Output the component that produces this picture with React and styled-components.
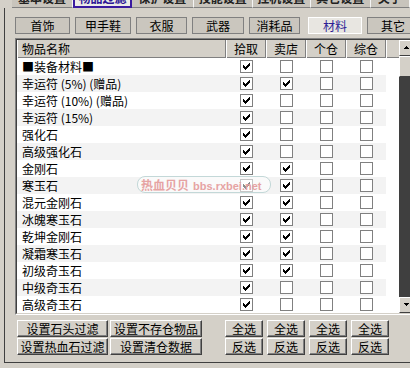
import React from 'react';
import styled, { createGlobalStyle } from 'styled-components';

const GlobalStyle = createGlobalStyle`
  html, body {
    margin: 0;
    padding: 0;
    background: #d4d0c8;
  }
  body {
    font-family: "Noto Sans CJK SC", "Liberation Sans", sans-serif;
    font-size: 12px;
    color: #000;
  }
  * { box-sizing: border-box; }
`;

const Window = styled.div`
  position: relative;
  width: 410px;
  height: 368px;
  overflow: hidden;
  background: #d4d0c8;
  display: flex;
  flex-direction: column;
`;

const TopTabs = styled.div`
  display: flex;
  height: 8px;
  padding-left: 12px;
  flex-shrink: 0;
`;

const TopTab = styled.div`
  width: ${p => p.$w}px;
  height: 8px;
  overflow: hidden;
  text-align: center;
  line-height: 12px;
  font-weight: bold;
  background: ${p => (p.$active ? '#ecebe7' : '#c8c4bc')};
  color: ${p => (p.$active ? '#2e1896' : '#222')};
  border: ${p => (p.$active ? '2px solid #3a1aa0' : 'none')};
  border-top: none;
  border-right: ${p => (p.$active ? '2px solid #3a1aa0' : '1px solid #f4f4f4')};
  border-bottom: ${p => (p.$active ? '2px solid #3a1aa0' : '1px solid #808080')};
  span {
    display: block;
    margin-top: -8px;
  }
`;

const Frame = styled.div`
  flex: 1;
  margin: 0 0 5px 4px;
  border-left: 1px solid #404040;
  border-bottom: 1px solid #404040;
  padding-left: 10px;
  display: flex;
  flex-direction: column;
`;

const Categories = styled.div`
  display: flex;
  gap: 5px;
  margin-top: 9px;
  height: 17px;
`;

const Category = styled.div`
  width: ${p => p.$w}px;
  flex-shrink: 0;
  margin-left: ${p => (p.$active ? 3 : 0)}px;
  border: 1px solid ${p => (p.$active ? '#ffffff' : '#808080')};
  background: ${p => (p.$active ? '#e8e6e1' : '#cac6be')};
  color: ${p => (p.$active ? '#2d1d96' : '#000')};
  text-align: center;
  line-height: 15px;
  font-size: 12px;
`;

const TableOuter = styled.div`
  margin-top: 4px;
  width: 402px;
  border: 1px solid;
  border-color: #808080 #ffffff #ffffff #808080;
`;

const TableInner = styled.div`
  display: flex;
  border: 1px solid;
  border-color: #404040 #d4d0c8 #d4d0c8 #404040;
  background: #fff;
`;

const ListArea = styled.div`
  width: 382px;
  display: flex;
  flex-direction: column;
`;

const Header = styled.div`
  display: grid;
  grid-template-columns: 209px repeat(4, 40px) 1fr;
  height: 18px;
  background: #d4d0c8;
  border-bottom: 1px solid #808080;
`;

const HeadCell = styled.div`
  border-right: ${p => (p.$last ? 'none' : '1px solid #808080')};
  border-left: 1px solid #ffffff;
  line-height: 18px;
  padding-left: ${p => (p.$left ? '4px' : '0')};
  text-align: ${p => (p.$left ? 'left' : 'center')};
`;

const Row = styled.div`
  display: grid;
  grid-template-columns: 369px 1fr;
  height: 17px;
`;

const RowCells = styled.div`
  display: grid;
  grid-template-columns: 209px repeat(4, 40px);
  align-items: center;
  background: ${p => (p.$stripe ? '#f3f3f3' : '#ffffff')};
`;

const NameCell = styled.div`
  padding-left: 5px;
  line-height: 17px;
  white-space: nowrap;
`;

const CheckCell = styled.div`
  display: flex;
  justify-content: center;
  align-items: center;
`;

const Box = styled.div`
  width: 13px;
  height: 13px;
  border: 1px solid #808080;
  background: #fff;
  display: flex;
  align-items: center;
  justify-content: center;
`;

const Scrollbar = styled.div`
  width: 16px;
  display: flex;
  flex-direction: column;
  background: #404040;
`;

const ScrollButton = styled.div`
  height: ${p => p.$h}px;
  background: #d4d0c8;
  border: 1px solid;
  border-color: #ffffff #404040 #404040 #ffffff;
  display: flex;
  align-items: center;
  padding-left: 2px;
`;

const Track = styled.div`
  flex: 1;
  background: #3f3f3f;
`;

const ButtonArea = styled.div`
  display: flex;
  gap: 23px;
  margin-top: 5px;
`;

const LeftGrid = styled.div`
  display: grid;
  grid-template-columns: 91px 92px;
  gap: 1px 2px;
  margin-left: 2px;
`;

const RightGrid = styled.div`
  display: grid;
  grid-template-columns: repeat(4, 38px);
  gap: 1px 4px;
`;

const Button = styled.div`
  height: 17px;
  background: #d4d0c8;
  border: 1px solid;
  border-color: #ffffff #404040 #404040 #ffffff;
  box-shadow: inset -1px -1px #808080;
  text-align: center;
  line-height: 15px;
  font-size: 12px;
`;

const Watermark = styled.div`
  position: absolute;
  left: 137px;
  top: 176px;
  width: 134px;
  height: 17px;
  border: 1px solid #c3d8d8;
  border-radius: 8px;
  background: rgba(255, 255, 255, 0.55);
  color: #e6a3a3;
  font-weight: bold;
  line-height: 15px;
  padding-left: 3px;
  white-space: nowrap;
  b {
    font-family: "Liberation Sans", sans-serif;
    font-size: 11px;
    margin-left: 4px;
  }
`;

const Check = () => (
  <svg width="9" height="9" viewBox="0 0 9 9" shapeRendering="crispEdges">
    <path d="M1 3h1v1h1v1h1V4h1V3h1V2h1V1h1v3h-1v1h-1v1h-1v1h-1v1H3V7H2V6H1z" fill="#000" />
  </svg>
);

const UpArrow = () => (
  <svg width="9" height="6" viewBox="0 0 9 6" shapeRendering="crispEdges">
    <path d="M4 1h1v1h1v1h1v1H2V3h1V2h1z" fill="#000" />
  </svg>
);

const DownArrow = () => (
  <svg width="9" height="6" viewBox="0 0 9 6" shapeRendering="crispEdges">
    <path d="M2 1h5v1H6v1H5v1H4V3H3V2H2z" fill="#000" />
  </svg>
);

const topTabs = [
  { label: '基本设置', w: 62 },
  { label: '物品过滤', w: 60, active: true },
  { label: '保护设置', w: 63 },
  { label: '技能设置', w: 60 },
  { label: '挂机设置', w: 59 },
  { label: '其它设置', w: 61 },
  { label: '关于', w: 40 },
];

const categories = [
  { label: '首饰', w: 55 },
  { label: '甲手鞋', w: 56 },
  { label: '衣服', w: 51 },
  { label: '武器', w: 52 },
  { label: '消耗品', w: 51 },
  { label: '材料', w: 54, active: true },
  { label: '其它', w: 52 },
];

const items = [
  ['■装备材料■', [1, 0, 0, 0]],
  ['幸运符 (5%) (赠品)', [1, 1, 0, 0]],
  ['幸运符 (10%) (赠品)', [1, 0, 0, 0]],
  ['幸运符 (15%)', [1, 0, 0, 0]],
  ['强化石', [1, 0, 0, 0]],
  ['高级强化石', [1, 0, 0, 0]],
  ['金刚石', [1, 1, 0, 0]],
  ['寒玉石', [1, 1, 0, 0]],
  ['混元金刚石', [1, 1, 0, 0]],
  ['冰魄寒玉石', [1, 1, 0, 0]],
  ['乾坤金刚石', [1, 1, 0, 0]],
  ['凝霜寒玉石', [1, 1, 0, 0]],
  ['初级奇玉石', [1, 1, 0, 0]],
  ['中级奇玉石', [1, 0, 0, 0]],
  ['高级奇玉石', [1, 0, 0, 0]],
];

export default function App() {
  return (
    <Window>
      <GlobalStyle />
      <TopTabs>
        {topTabs.map(t => (
          <TopTab key={t.label} $w={t.w} $active={t.active}>
            <span>{t.label}</span>
          </TopTab>
        ))}
      </TopTabs>
      <Frame>
        <Categories>
          {categories.map(c => (
            <Category key={c.label} $w={c.w} $active={c.active}>
              {c.label}
            </Category>
          ))}
        </Categories>
        <TableOuter>
          <TableInner>
            <ListArea>
              <Header>
                <HeadCell $left>物品名称</HeadCell>
                <HeadCell>拾取</HeadCell>
                <HeadCell>卖店</HeadCell>
                <HeadCell>个仓</HeadCell>
                <HeadCell>综仓</HeadCell>
                <HeadCell $last />
              </Header>
              {items.map(([name, flags], i) => (
                <Row key={name}>
                  <RowCells $stripe={i % 2 === 1}>
                    <NameCell>{name}</NameCell>
                    {flags.map((f, j) => (
                      <CheckCell key={j}>
                        <Box>{f ? <Check /> : null}</Box>
                      </CheckCell>
                    ))}
                  </RowCells>
                  <div />
                </Row>
              ))}
            </ListArea>
            <Scrollbar>
              <ScrollButton $h={16}><UpArrow /></ScrollButton>
              <ScrollButton $h={21} />
              <Track />
              <ScrollButton $h={16}><DownArrow /></ScrollButton>
            </Scrollbar>
          </TableInner>
        </TableOuter>
        <ButtonArea>
          <LeftGrid>
            <Button>设置石头过滤</Button>
            <Button>设置不存仓物品</Button>
            <Button>设置热血石过滤</Button>
            <Button>设置清仓数据</Button>
          </LeftGrid>
          <RightGrid>
            <Button>全选</Button>
            <Button>全选</Button>
            <Button>全选</Button>
            <Button>全选</Button>
            <Button>反选</Button>
            <Button>反选</Button>
            <Button>反选</Button>
            <Button>反选</Button>
          </RightGrid>
        </ButtonArea>
      </Frame>
      <Watermark>
        热血贝贝<b>bbs.rxbei.net</b>
      </Watermark>
    </Window>
  );
}
